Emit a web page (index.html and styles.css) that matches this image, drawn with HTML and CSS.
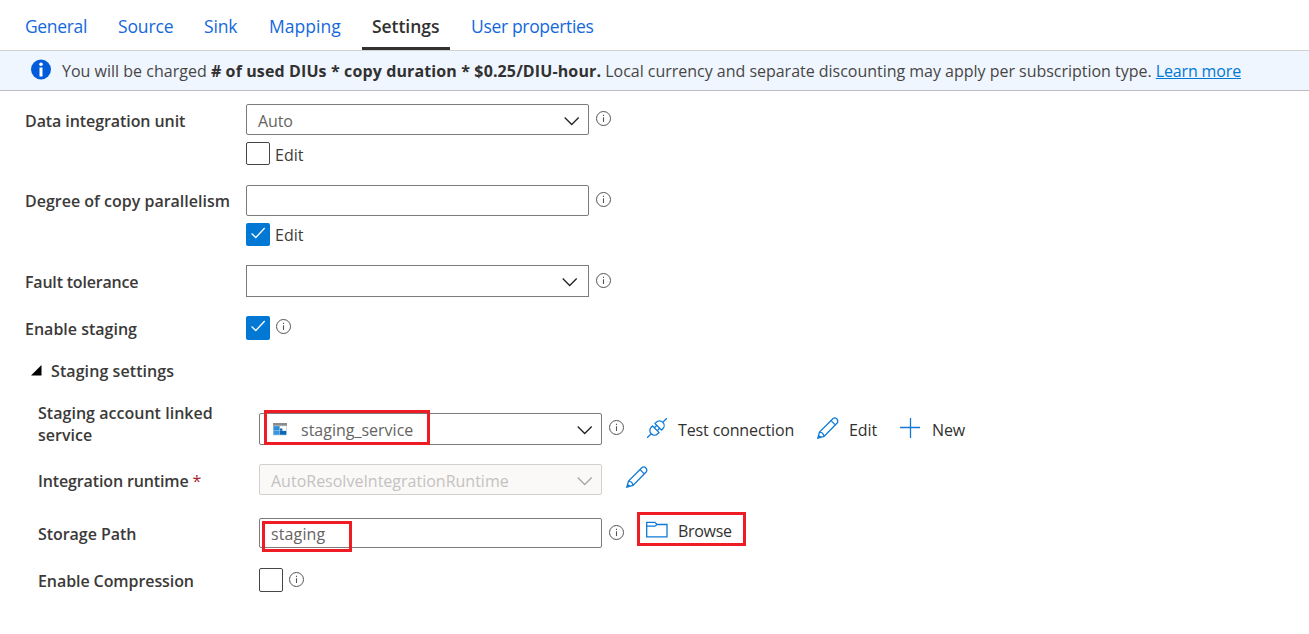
FILE: index.html
```html
<!DOCTYPE html>
<html lang="en">
<head>
<meta charset="utf-8">
<title>Copy activity settings</title>
<link rel="stylesheet" href="styles.css">
</head>
<body>
<svg class="defs" width="0" height="0">
  <symbol id="info" viewBox="0 0 16 16"><circle cx="7.5" cy="7.5" r="7" fill="none" stroke="#555" stroke-width="1"/><path d="M7.5 6.3v4.7M7.5 3.8v1.2" stroke="#555" stroke-width="1.1" fill="none"/></symbol>
  <symbol id="chev" viewBox="0 0 16 10"><path d="M.7 1.5l7 7 7-7" fill="none" stroke="currentColor" stroke-width="1.3"/></symbol>
  <symbol id="check" viewBox="0 0 24 24"><path d="M5 11.5l4.6 4.3L19.3 5.5" fill="none" stroke="#fff" stroke-width="1.4"/></symbol>
  <symbol id="pencil" viewBox="0 0 22 22"><path d="M.8 21.2l1.7-6.1L15.6 2a2.8 2.8 0 0 1 4.3 4.3L7 19.4zM2.5 15.1a5 5 0 0 1 4.5 4.3M14 3.6l4.3 4.3M1.6 18.4l2 2" fill="none" stroke="#0f7ad6" stroke-width="1.3"/></symbol>
</svg>
<nav class="tabs">
  <a class="tab t1">General</a><a class="tab t2">Source</a><a class="tab t3">Sink</a><a class="tab t4">Mapping</a><a class="tab t5 active">Settings</a><a class="tab t6">User properties</a>
</nav>
<div class="banner">
  <svg class="banner-icon" viewBox="0 0 20 20"><circle cx="10" cy="10" r="10" fill="#015cda"/><path d="M10 8v9" stroke="#fff" stroke-width="3"/><circle cx="10" cy="4.7" r="1.8" fill="#fff"/></svg>
  <p class="banner-text"><span class="lead">You will be charged </span><b>#&nbsp;of used DIUs * copy duration * $0.25/DIU-hour.</b><span class="rest"> Local currency and separate discounting may apply per subscription type. </span><a class="learn">Learn more</a></p>
</div>
<main class="form">
  <div class="row r1"><div class="label"><span class="l1">Data integration unit</span></div>
    <div class="field"><div class="line"><div class="box"><span class="value">Auto</span><svg class="chev"><use href="#chev"/></svg></div><svg class="info"><use href="#info"/></svg></div>
    <div class="line edit"><span class="cb"></span><span>Edit</span></div></div></div>
  <div class="row r2"><div class="label"><span class="l2">Degree of copy parallelism</span></div>
    <div class="field"><div class="line"><div class="box"></div><svg class="info"><use href="#info"/></svg></div>
    <div class="line edit"><span class="cb on"><svg><use href="#check"/></svg></span><span>Edit</span></div></div></div>
  <div class="row r3"><div class="label"><span class="l3">Fault tolerance</span></div>
    <div class="field"><div class="line"><div class="box square"><svg class="chev"><use href="#chev"/></svg></div><svg class="info"><use href="#info"/></svg></div></div></div>
  <div class="row r4"><div class="label"><span class="l4">Enable staging</span></div>
    <div class="field"><div class="line check"><span class="cb tall on"><svg><use href="#check"/></svg></span><svg class="info"><use href="#info"/></svg></div></div></div>
  <div class="section"><svg class="tri" viewBox="0 0 11 11"><path d="M0 10.5H10.5V0z"/></svg><span class="l5">Staging settings</span></div>
  <div class="sub">
    <div class="row r5"><div class="label"><span class="l6">Staging account linked<br>service</span></div>
      <div class="field"><div class="line"><div class="box high"><svg class="store" viewBox="0 0 14 13"><path d="M0 0h14v12.4H0z" fill="#c9d6e0"/><path d="M0 0h14v2.6H0z" fill="#8b8b8b"/><path d="M.5 3.2h6v4.3h-6z" fill="#2b8ddd"/><path d="M7 3.2h6.2v4.3H7z" fill="#fff"/><path d="M.5 8h5.7v3.8H.5z" fill="#3b95dc"/><path d="M6.7 8h6.5v3.8H6.7zM7 5.4h2.4v2.4H7z" fill="#0869bb"/></svg><span class="value service">staging_service</span><svg class="chev"><use href="#chev"/></svg><i class="mark m1"></i></div><svg class="info"><use href="#info"/></svg>
        <div class="actions">
          <svg class="plug" viewBox="0 0 20 20"><g transform="translate(10 10) rotate(-45)" fill="none" stroke="#0f7ad6" stroke-width="1.25"><path d="M-14 0H-8.2M8.2 0H14M-1.7-4.6V4.6H-3.6A4.6 4.6 0 0 1-3.6-4.6zM1.7-4.6V4.6H3.6A4.6 4.6 0 0 0 3.6-4.6zM-1.7-2H1.7M-1.7 2H1.7"/></g></svg><span class="a1">Test connection</span>
          <svg class="pencil"><use href="#pencil"/></svg><span class="a2">Edit</span>
          <svg class="plus" viewBox="0 0 20 20"><path d="M10.5 0v20M0 9.5h20" stroke="#0f7ad6" stroke-width="1.3"/></svg><span class="a3">New</span>
        </div></div></div></div>
    <div class="row r6"><div class="label"><span class="l7">Integration runtime</span> <span class="req">*</span></div>
      <div class="field"><div class="line"><div class="box disabled"><span class="value runtime">AutoResolveIntegrationRuntime</span><svg class="chev"><use href="#chev"/></svg></div><svg class="pencil solo"><use href="#pencil"/></svg></div></div></div>
    <div class="row r7"><div class="label"><span class="l8">Storage Path</span></div>
      <div class="field"><div class="line"><div class="box low"><span class="value path">staging</span><i class="mark m2"></i></div><svg class="info"><use href="#info"/></svg>
        <div class="browse"><svg class="folder" viewBox="0 0 22 17"><path d="M.7 15.8V1.3h8.2l2.2 2.2h9.9v12.3zM.7 5.2h8.2l2.2-1.7" fill="none" stroke="#0f7ad6" stroke-width="1.3"/></svg><span class="a4">Browse</span></div></div></div></div>
    <div class="row r8"><div class="label"><span class="l9">Enable Compression</span></div>
      <div class="field"><div class="line check"><span class="cb tall"></span><svg class="info"><use href="#info"/></svg></div></div></div>
  </div>
</main>
</body>
</html>
```
FILE: styles.css
```css
* { box-sizing: border-box; }
body { margin: 0; width: 1309px; height: 634px; overflow: hidden; background: #fff; color: #3b3a39; font: 16px/22px "Segoe UI", "Open Sans", "Noto Sans", sans-serif; letter-spacing: -.15px; white-space: nowrap; }
svg { display: block; flex: none; }
.defs { position: absolute; }
.tabs { display: flex; height: 51px; padding-left: 15px; border-bottom: 1px solid #d2d2d2; }
.tab { height: 50px; padding: 16px 0 0 10px; color: #1468dc; font-size: 17.5px; line-height: 21px; border-bottom: 0 solid #323130; }
.t1 { width: 93px; letter-spacing: -.35px; } .t2 { width: 86px; } .t3 { width: 65px; } .t4 { width: 103px; letter-spacing: .05px; } .t5 { width: 88px; margin-right: 10px; letter-spacing: -.05px; } .t6 { padding-left: 11px; letter-spacing: -.33px; }
.tab.active { color: #323130; font-weight: 600; border-bottom-width: 3px; }
.banner { display: flex; height: 40px; padding: 8px 0 0 31px; background: #eff6ff; border-bottom: 1px solid #bdbdbd; }
.banner-icon { width: 20px; height: 21px; margin-right: 11px; }
.banner-text { margin: 1px 0 0; color: #484644; letter-spacing: -.02px; }
.banner-text .lead { letter-spacing: .01px; }
b { font-weight: 700; letter-spacing: .12px; color: #323130; }
.learn { color: #0078d4; text-decoration: underline; letter-spacing: -.15px; }
.form { padding: 13px 0 0 25px; }
.row { display: flex; }
.label { width: 221px; padding-top: 6px; font-weight: 600; }
.l1 { letter-spacing: -.08px; } .l2 { letter-spacing: 0; } .l3 { letter-spacing: -.2px; } .l4 { letter-spacing: 0; }
.l5 { letter-spacing: .08px; } .l6 { letter-spacing: .03px; } .l7 { letter-spacing: -.13px; } .l8 { letter-spacing: -.05px; } .l9 { letter-spacing: -.08px; }
.r1 { height: 81px; } .r2 { height: 80px; } .r3 { height: 51px; } .r4 { height: 44px; }
.r2 .label { padding-top: 5px; }
.r4 .label { padding-top: 2px; }
.line { display: flex; }
.box { position: relative; display: flex; width: 343px; height: 31px; padding: 5px 0 0 11px; border: 1px solid #7d7c7b; border-radius: 2px; color: #666462; }
.square { height: 32px; border-radius: 0; }
.high { height: 32px; }
.low { height: 30px; }
.service, .runtime { letter-spacing: 0; }
.path { letter-spacing: .12px; }
.info { width: 16px; height: 16px; margin: 7px 0 0 7px; }
.r3 .info { margin-top: 8px; }
.chev { width: 16px; height: 10px; margin: 6px 8px 0 auto; color: #222; }
.square .chev { margin-right: 10px; }
.edit { margin-top: 7px; gap: 5px; }
.edit > span:last-child { padding-top: 2px; letter-spacing: 0; }
.r2 .edit > span:last-child { padding-top: 1px; }
.cb { width: 24px; height: 23px; border: 1px solid #484644; border-radius: 2px; }
.cb.tall { height: 24px; }
.cb.on { border: 0; background: #0078d4; }
.cb svg { width: 24px; height: 22px; }
.check .info { margin: 3px 0 0 6px; }
.r8 .check .info { margin-top: 4px; }
.section { display: flex; height: 42px; font-weight: 600; }
.tri { width: 11px; height: 11px; margin: 5px 9px 0 6px; }
.sub { padding-left: 13px; }
.r5 { height: 62px; }
.r5 .label { padding-top: 0; }
.r5 .field { padding-top: 11px; }
.r6 { height: 54px; }
.r7 { height: 50px; }
.r7 .label { padding-top: 5px; }
.r7 .box { padding-top: 4px; }
.r8 .label { padding-top: 2px; }
.store { width: 14px; height: 13px; margin: 4px 14px 0 2px; }
.actions { display: flex; color: #323130; padding-top: 6px; }
.plug { width: 20px; height: 20px; margin: -1px 11px 0 22px; }
.a1 { width: 139px; letter-spacing: -.13px; } .a2 { width: 52px; letter-spacing: -.1px; }
.pencil { width: 22px; height: 22px; margin: -2px 10px 0 0; }
.pencil.solo { margin: 2px 0 0 24px; }
.plus { width: 20px; height: 20px; margin: -1px 12px 0 -1px; }
.req { color: #a4262c; font-weight: 400; }
.disabled { background: #faf9f8; border-color: #d2d0ce; color: #c4c2c0; }
.disabled .chev { color: #a9a7a5; }
.browse { display: flex; width: 109px; height: 34px; margin: -6px 0 0 12px; padding: 5px 0 0 6px; border: 3px solid #ee1c25; color: #323130; }
.folder { width: 22px; height: 17px; margin: 1px 10px 0 0; }
.a4 { letter-spacing: -.3px; }
.mark { position: absolute; border: 3px solid #ee1c25; }
.m1 { left: 4px; top: -4px; width: 166px; height: 35px; }
.m2 { left: 2px; top: 2px; width: 90px; height: 31px; }
```
